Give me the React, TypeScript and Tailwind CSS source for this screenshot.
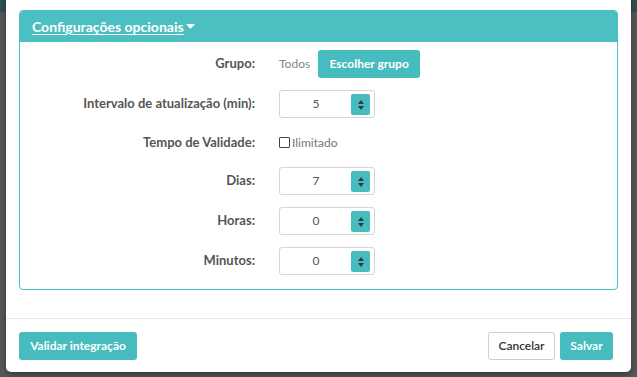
import React from "react";

const font = { fontFamily: "Lato, 'Open Sans', sans-serif" };

function Spinner({ value }: { value: string }) {
  return (
    <div className="relative flex h-[28px] w-[96px] items-center rounded-[3px] border border-[#d6d6d6] bg-white">
      <div className="flex-1 pr-[22px] text-center text-[12px] text-[#555]">{value}</div>
      <div className="absolute right-[4px] top-[3px] flex h-[21px] w-[19px] flex-col items-center justify-center gap-[2px] rounded-[2px] bg-[#47bcbe]">
        <svg width="6" height="4" viewBox="0 0 6 4"><path d="M3 0L6 4H0Z" fill="#2d3b3c" /></svg>
        <svg width="6" height="4" viewBox="0 0 6 4"><path d="M0 0H6L3 4Z" fill="#2d3b3c" /></svg>
      </div>
    </div>
  );
}

function Row({ label, children, h = 28 }: { label: string; children: React.ReactNode; h?: number }) {
  return (
    <div className="flex items-center" style={{ height: h }}>
      <div className="w-[235px] text-right text-[13px] font-bold text-[#555]">{label}</div>
      <div className="ml-[24px] flex items-center">{children}</div>
    </div>
  );
}

export default function App() {
  return (
    <div className="relative h-[377px] w-[637px] overflow-hidden bg-[#595959]" style={font}>
      <div className="absolute left-0 top-0 h-[12px] w-full bg-[#2f5354]" />
      <div className="absolute left-[6px] top-[-10px] h-[382px] w-[625px] rounded-[5px] bg-white shadow-[0_3px_8px_rgba(0,0,0,0.4)]">
        <div className="px-[13px] pt-[20px]">
          <div className="overflow-hidden rounded-[4px] border border-[#4bbfc1]">
            <div className="flex h-[31px] items-center bg-[#4bbfc1] px-[12px]">
              <span className="text-[14px] font-bold text-white underline decoration-1 underline-offset-2">Configurações opcionais</span>
              <svg className="ml-[2px]" width="9" height="5" viewBox="0 0 9 5"><path d="M0 0H9L4.5 5Z" fill="white" /></svg>
            </div>
            <div className="flex flex-col gap-[12px] pb-[14px] pt-[8px]">
              <Row label="Grupo:">
                <span className="text-[12px] text-[#888]">Todos</span>
                <button className="ml-[8px] h-[28px] w-[102px] rounded-[3px] bg-[#47bcbe] text-[12px] font-bold text-white">Escolher grupo</button>
              </Row>
              <Row label="Intervalo de atualização (min):">
                <Spinner value="5" />
              </Row>
              <Row label="Tempo de Validade:" h={25}>
                <div className="flex items-center">
                  <span className="box-border h-[11px] w-[11px] rounded-[1px] border border-[#444] bg-white" />
                  <span className="ml-[2px] text-[12px] text-[#777]">Ilimitado</span>
                </div>
              </Row>
              <Row label="Dias:">
                <Spinner value="7" />
              </Row>
              <Row label="Horas:">
                <Spinner value="0" />
              </Row>
              <Row label="Minutos:">
                <Spinner value="0" />
              </Row>
            </div>
          </div>
        </div>
        <div className="mt-[28px] border-t border-[#e6e6e6]" />
        <div className="flex items-center pl-[13px] pr-[18px] pt-[13px]">
          <button className="h-[28px] w-[118px] rounded-[3px] bg-[#47bcbe] text-[12px] font-bold text-white">Validar integração</button>
          <div className="flex-1" />
          <button className="h-[28px] w-[67px] rounded-[3px] border border-[#cfcfcf] bg-white text-[12px] font-semibold text-[#333]">Cancelar</button>
          <button className="ml-[5px] h-[28px] w-[53px] rounded-[3px] bg-[#47bcbe] text-[12px] font-bold text-white">Salvar</button>
        </div>
      </div>
    </div>
  );
}
